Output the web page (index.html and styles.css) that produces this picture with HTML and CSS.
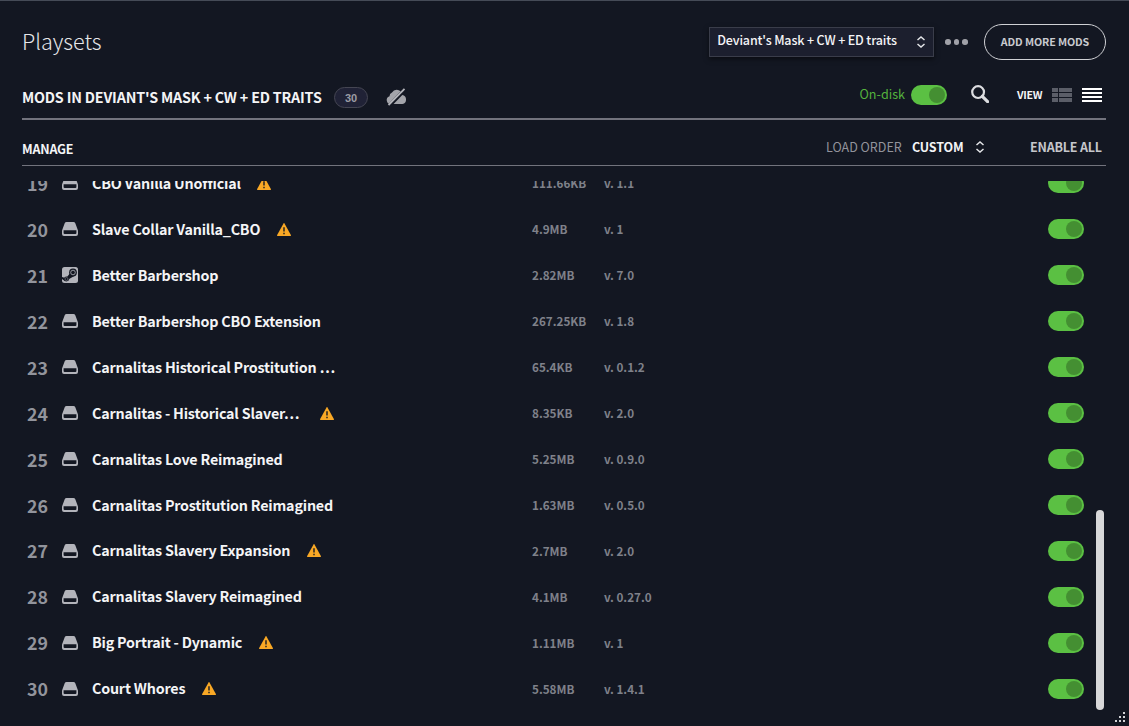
FILE: index.html
```html
<!DOCTYPE html>
<html lang="en">
<head>
<meta charset="utf-8">
<title>Playsets</title>
<link rel="stylesheet" href="styles.css">
</head>
<body>
<svg class="defs" aria-hidden="true">
  <symbol id="drive" viewBox="0 0 16 14"><path fill="#b3b4bb" fill-rule="evenodd" d="M4.6 0h6.8q1.4 0 1.9 1.3L15.800 8q.2.600.2 1.300V12q0 2-2 2H2q-2 0-2-2V9.300Q0 8.600.2 8L2.700 1.300Q3.200 0 4.600 0ZM1.600 8.200V11q0 1 1 1h10.800q1 0 1-1V8.200Z"/></symbol>
  <symbol id="steam" viewBox="0 0 16 16"><rect width="16" height="16" rx="2.500" fill="#b3b4bb"/><path d="m0 10 4 1.300 4-5 4 3-4.500 2.500-1.500 2-3 .400L0 12Z" fill="#131722"/><circle cx="11" cy="5.500" r="3.900" fill="#131722"/><circle cx="11" cy="5.500" r="2.300" fill="#131722" stroke="#b3b4bb" stroke-width=".8"/><circle cx="4.500" cy="12" r="2.400" fill="#131722"/><circle cx="4.500" cy="12" r="1.500" fill="none" stroke="#b3b4bb" stroke-width=".4"/></symbol>
  <symbol id="warn" viewBox="0 0 14 13"><path fill="#f9a825" d="M6.500.5Q7-.3 7.500.5L14 12.200q.1.800-.5.800H.5q-.6 0-.5-.8Z"/><path d="M7 4.300v4.200M7 9.700v1.500" stroke="#332b22" stroke-width="1.600"/></symbol>
  <symbol id="sort" viewBox="0 0 10 12"><path d="m1.500 4 3.500-3 3.500 3M1.500 8 5 11l3.500-3" fill="none" stroke="#e4e5e8" stroke-width="1.500"/></symbol>
</svg>
<div class="app">
  <header class="top">
    <h1 class="title">Playsets</h1>
    <div class="select"><span>Deviant's Mask + CW + ED traits</span><svg class="sort"><use href="#sort"/></svg></div>
    <div class="dots"><i></i><i></i><i></i></div>
    <button class="add">ADD MORE MODS</button>
  </header>
  <section class="bar">
    <h2 class="heading">MODS IN DEVIANT'S MASK + CW + ED TRAITS</h2>
    <span class="badge">30</span>
    <svg class="cloud" viewBox="0 0 22 18"><path fill="#a3a4aa" d="M5 16a4 4 0 0 1-1.500-7.800A3.800 3.800 0 0 1 6 4.500a5.600 5.600 0 0 1 10.300 2.500A4.600 4.600 0 0 1 16.500 16Z"/><path d="M3.500 17.500 20 .5" stroke="#131722" stroke-width="3.800"/><path d="M2.500 17 18.500.8" stroke="#b3b4ba" stroke-width="1.800"/></svg>
    <span class="ondisk">On-disk</span>
    <span class="toggle"></span>
    <svg class="search" viewBox="0 0 18 18"><circle cx="7.100" cy="7.100" r="5.900" fill="none" stroke="#dcdde0" stroke-width="2.200"/><path d="m11.300 11.300 5.300 5.300" stroke="#dcdde0" stroke-width="3.200" stroke-linecap="round"/></svg>
    <span class="view">VIEW</span>
    <svg class="grid" viewBox="0 0 20 14"><path fill="#5b5e68" d="M0 0h6v4H0zM7 0h13v4H7zM0 5h6v4H0zM7 5h13v4H7zM0 10h6v4H0zM7 10h13v4H7z"/></svg>
    <svg class="lines" viewBox="0 0 20 14"><path fill="#fff" d="M0 0h20v2H0zM0 4h20v2H0zM0 8h20v2H0zM0 12h20v2H0z"/></svg>
  </section>
  <section class="columns">
    <span class="manage">MANAGE</span>
    <span class="load">LOAD ORDER</span>
    <span class="custom">CUSTOM</span>
    <svg class="sort"><use href="#sort"/></svg>
    <span class="enable">ENABLE ALL</span>
  </section>
  <main class="list">
    <div class="row"><b>19</b><svg class="src"><use href="#drive"/></svg><div class="mod"><span>CBO Vanilla Unofficial</span><svg class="warn"><use href="#warn"/></svg></div><em>111.66KB</em><em class="ver">v. 1.1</em><span class="toggle"></span></div>
    <div class="row"><b>20</b><svg class="src"><use href="#drive"/></svg><div class="mod"><span>Slave Collar Vanilla_CBO</span><svg class="warn"><use href="#warn"/></svg></div><em>4.9MB</em><em class="ver">v. 1</em><span class="toggle"></span></div>
    <div class="row"><b>21</b><svg class="src steam"><use href="#steam"/></svg><div class="mod"><span>Better Barbershop</span></div><em>2.82MB</em><em class="ver">v. 7.0</em><span class="toggle"></span></div>
    <div class="row"><b>22</b><svg class="src"><use href="#drive"/></svg><div class="mod"><span>Better Barbershop CBO Extension</span></div><em>267.25KB</em><em class="ver">v. 1.8</em><span class="toggle"></span></div>
    <div class="row"><b>23</b><svg class="src"><use href="#drive"/></svg><div class="mod"><span>Carnalitas Historical Prostitution …</span></div><em>65.4KB</em><em class="ver">v. 0.1.2</em><span class="toggle"></span></div>
    <div class="row"><b>24</b><svg class="src"><use href="#drive"/></svg><div class="mod"><span>Carnalitas - Historical Slaver…</span><svg class="warn far"><use href="#warn"/></svg></div><em>8.35KB</em><em class="ver">v. 2.0</em><span class="toggle"></span></div>
    <div class="row"><b>25</b><svg class="src"><use href="#drive"/></svg><div class="mod"><span>Carnalitas Love Reimagined</span></div><em>5.25MB</em><em class="ver">v. 0.9.0</em><span class="toggle"></span></div>
    <div class="row"><b>26</b><svg class="src"><use href="#drive"/></svg><div class="mod"><span>Carnalitas Prostitution Reimagined</span></div><em>1.63MB</em><em class="ver">v. 0.5.0</em><span class="toggle"></span></div>
    <div class="row"><b class="up">27</b><svg class="src"><use href="#drive"/></svg><div class="mod up"><span>Carnalitas Slavery Expansion</span><svg class="warn"><use href="#warn"/></svg></div><em>2.7MB</em><em class="ver">v. 2.0</em><span class="toggle"></span></div>
    <div class="row"><b class="up">28</b><svg class="src"><use href="#drive"/></svg><div class="mod up"><span>Carnalitas Slavery Reimagined</span></div><em>4.1MB</em><em class="ver">v. 0.27.0</em><span class="toggle"></span></div>
    <div class="row"><b class="up">29</b><svg class="src"><use href="#drive"/></svg><div class="mod up"><span>Big Portrait - Dynamic</span><svg class="warn"><use href="#warn"/></svg></div><em>1.11MB</em><em class="ver">v. 1</em><span class="toggle"></span></div>
    <div class="row"><b class="up">30</b><svg class="src"><use href="#drive"/></svg><div class="mod up"><span>Court Whores</span><svg class="warn"><use href="#warn"/></svg></div><em>5.58MB</em><em class="ver">v. 1.4.1</em><span class="toggle"></span></div>
  </main>
  <div class="scrollbar"></div>
  <svg class="grip" viewBox="0 0 11 11"><path fill="#d2d3d6" d="M8 0h2v2H8zM4 4h2v2H4zM8 4h2v2H8zM0 8h2v2H0zM4 8h2v2H4zM8 8h2v2H8z"/></svg>
</div>
</body>
</html>
```
FILE: styles.css
```css
* { box-sizing: border-box; }
body { margin: 0; background: #131722; font-family: "Noto Sans CJK SC", "Noto Sans", sans-serif; color: #f4f4f6; }
h1, h2 { margin: 0; font-weight: 400; }
svg { display: block; flex: none; }
.defs { position: absolute; width: 0; height: 0; }
.app { position: relative; width: 1129px; height: 726px; overflow: hidden; border-top: 1px solid #454b57; padding: 0 23px 0 22px; white-space: nowrap; }

.top { display: flex; align-items: center; height: 81px; }
.title { flex: 1; margin-top: -2px; font-size: 21.6px; font-weight: 300; line-height: 30px; color: #e6e7ea; }
.select { width: 225px; height: 30px; display: flex; align-items: center; justify-content: space-between; padding: 0 7px; background: #1c1f2e; border: 1px solid #3a3d4a; box-shadow: 0 2px 5px rgba(0,0,0,.5); font-size: 12.500px; font-weight: 500; letter-spacing: -.15px; line-height: 28px; }
.select span { margin-top: -3px; }
.sort { width: 10px; height: 12px; }
.dots { display: flex; gap: 3px; margin: 1px 16px 0 11px; }
.dots i { width: 5.600px; height: 5.600px; border-radius: 50%; background: #a0a1a8; }
.add { width: 122px; height: 36px; padding: 0; border: 1px solid #d0d1d5; border-radius: 18px; background: none; color: #c9cacf; font: 700 10.700px/32px "Noto Sans CJK SC", sans-serif; letter-spacing: -.12px; }

.bar { display: flex; align-items: center; height: 38px; padding: 0 4px 11px 0; border-bottom: 2px solid #72737d; }
.heading { width: 312px; font-size: 14.300px; font-weight: 700; letter-spacing: -.18px; line-height: 24px; margin-top: 5px; }
.badge { width: 34px; height: 21px; margin-top: 5px; border: 1px solid #454653; border-radius: 11px; background: #202236; color: #9b9ca4; font: 700 11px/20px "Liberation Sans", Arial, sans-serif; text-align: center; }
.cloud { width: 22px; height: 18px; margin: 5px 0 0 18px; }
.ondisk { margin: -2px 0 0 auto; width: 51.500px; color: #55b33e; font-size: 12.600px; line-height: 20px; }
.toggle { flex: none; width: 36px; height: 20px; padding: 2px; border-radius: 10px; background: #5bc043; }
.toggle::after { content: ""; display: block; width: 16px; height: 16px; margin-left: auto; border-radius: 50%; background: #448f32; }
.search { width: 18px; height: 18px; margin: -2px 28px 0 24px; }
.view { width: 35px; font-size: 10.700px; font-weight: 700; letter-spacing: -.3px; line-height: 18px; }
.grid, .lines { width: 20px; height: 14px; }
.lines { margin-left: 10px; }

.columns { display: flex; align-items: center; height: 46px; padding: 8px 4px 0 0; border-bottom: 1px solid #72737d; font-size: 12.500px; line-height: 20px; }
.manage { flex: 1; font-weight: 700; letter-spacing: -.2px; margin-top: 4px; }
.load { width: 86px; color: #92939b; }
.custom { width: 63px; font-weight: 700; letter-spacing: -.15px; }
.enable { width: 72px; margin-left: 45px; font-weight: 700; letter-spacing: -.2px; color: #c5c6cb; }

.list { height: 545px; margin-top: 15px; overflow: hidden; }
.row { display: flex; align-items: center; height: 46px; padding: 0 0 0 5px; }
.row:first-child { margin-top: -21px; }
.row b { width: 35px; font-size: 17.800px; line-height: 26px; font-weight: 700; color: #92949c; }
.src { width: 16px; height: 14px; }
.steam { height: 16px; }
.mod { width: 440px; margin-left: 14px; display: flex; align-items: center; font-size: 14.300px; line-height: 24px; font-weight: 700; letter-spacing: -.19px; }
.up { margin-top: -2px; }
.warn { width: 14px; height: 13px; margin-left: 16.400px; }
.far { margin-left: 21px; }
.row em { width: 72px; font-style: normal; font-size: 11.700px; font-weight: 700; color: #7f818a; line-height: 20px; }
.row .ver { width: 444px; }
.scrollbar { position: absolute; left: 1096px; top: 509px; width: 8px; height: 200px; border-radius: 4px; background: #d8d8d9; }
.grip { position: absolute; left: 1115px; top: 711px; width: 11px; height: 11px; }
```
